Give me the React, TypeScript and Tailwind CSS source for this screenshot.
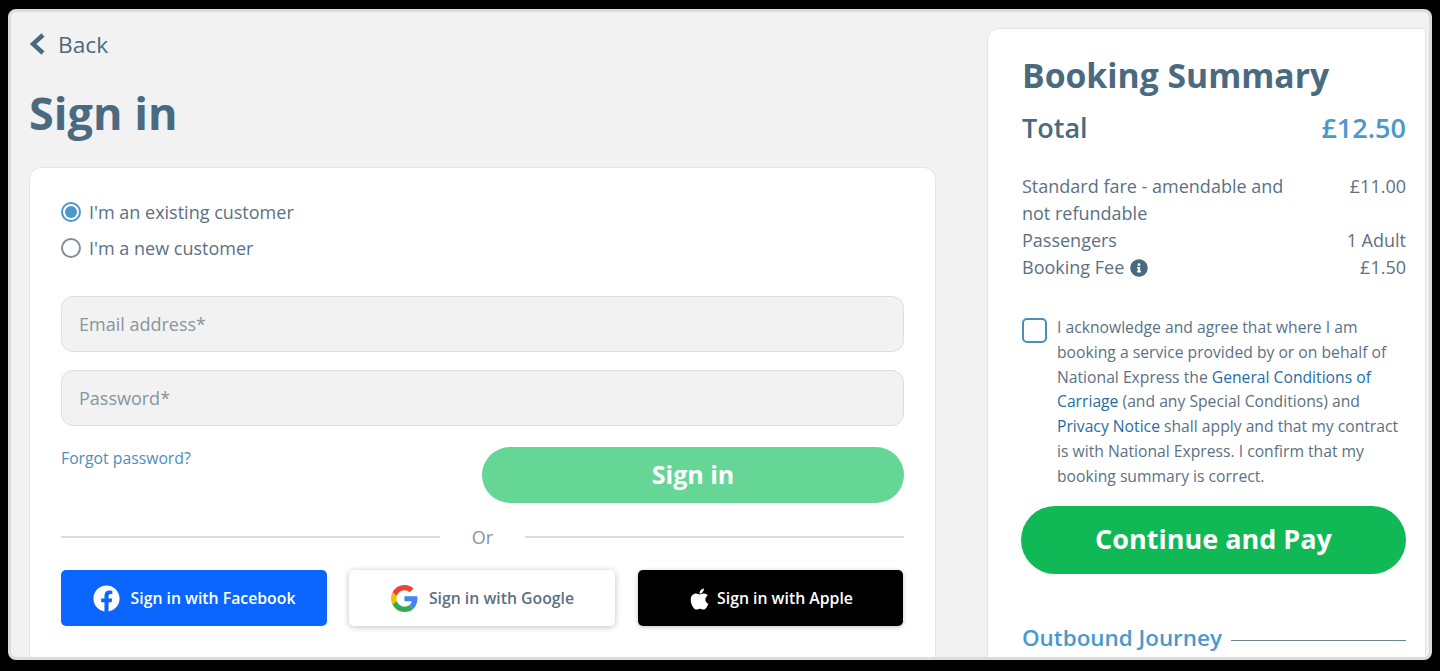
import { FaApple, FaFacebook, FaInfoCircle } from 'react-icons/fa';

function GoogleLogo() {
  return (
    <svg className="w-[27px] h-[27px]" viewBox="0 0 48 48">
      <path fill="#EA4335" d="M24 9.5c3.54 0 6.71 1.22 9.21 3.6l6.85-6.85C35.9 2.38 30.47 0 24 0 14.62 0 6.51 5.38 2.56 13.22l7.98 6.19C12.43 13.72 17.74 9.5 24 9.5z" />
      <path fill="#4285F4" d="M46.98 24.55c0-1.57-.15-3.09-.38-4.55H24v9.02h12.94c-.58 2.96-2.26 5.48-4.78 7.18l7.73 6c4.51-4.18 7.09-10.36 7.09-17.65z" />
      <path fill="#FBBC05" d="M10.53 28.59c-.48-1.45-.76-2.99-.76-4.59s.27-3.14.76-4.59l-7.98-6.19C.92 16.46 0 20.12 0 24c0 3.88.92 7.54 2.56 10.78l7.97-6.19z" />
      <path fill="#34A853" d="M24 48c6.48 0 11.93-2.13 15.89-5.81l-7.73-6c-2.15 1.45-4.92 2.3-8.16 2.3-6.26 0-11.57-4.22-13.47-9.91l-7.98 6.19C6.51 42.62 14.62 48 24 48z" />
    </svg>
  );
}

function Row({ label, value }: { label: React.ReactNode; value: string }) {
  return (
    <div className="flex justify-between">
      <div className="w-[275px]">{label}</div>
      <div>{value}</div>
    </div>
  );
}

export default function App() {
  return (
    <div className="h-screen bg-black pt-[9px] pl-[8px] pr-[8px] pb-[11px] font-['Open_Sans',sans-serif] text-[#4a6a80]">
      <div className="h-full bg-[#f2f2f2] border-[3px] border-[#dcdcdc] rounded-[8px] overflow-hidden flex pl-[18px] pr-[3px] pt-[16px]">
        {/* left column */}
        <div className="w-[907px] shrink-0">
          <div className="flex items-center gap-[12px] h-[34px]">
            <svg className="w-[17px] h-[24px] -mt-[3px]" viewBox="0 0 17 24" fill="none" stroke="currentColor" strokeWidth="4.4">
              <polyline points="14,3 4,12 14,21" />
            </svg>
            <span className="text-[22.7px]">Back</span>
          </div>
          <h1 className="text-[45px] leading-[60px] font-bold mt-[21px] text-[#4a6a80]">Sign in</h1>
          <div className="mt-[24px] bg-white border border-[#e4e4e4] rounded-[12px] px-[31px] pt-[32px] pb-[40px]">
            <div className="flex flex-col gap-[12px] text-[18px] leading-[24px] text-[#5b7183]">
              <label className="flex items-center gap-[8px]">
                <span className="w-[20px] h-[20px] rounded-full border-2 border-[#4a98cc] flex items-center justify-center">
                  <span className="w-[12px] h-[12px] rounded-full bg-[#4a98cc]" />
                </span>
                I'm an existing customer
              </label>
              <label className="flex items-center gap-[8px]">
                <span className="w-[20px] h-[20px] rounded-full border-2 border-[#7d8f9c]" />
                I'm a new customer
              </label>
            </div>
            <div className="mt-[36px] flex flex-col gap-[18px]">
              <div className="h-[56px] bg-[#f2f2f2] border border-[#dedede] rounded-[12px] px-[17px] flex items-center text-[18px] text-[#87959f]">Email address*</div>
              <div className="h-[56px] bg-[#f2f2f2] border border-[#dedede] rounded-[12px] px-[17px] flex items-center text-[18px] text-[#87959f]">Password*</div>
            </div>
            <div className="flex justify-between mt-[21px]">
              <a className="text-[15.75px] leading-[24px] text-[#4a8fbe] -mt-px">Forgot password?</a>
              <div className="w-[422px] h-[56px] rounded-full bg-[#65d695] text-white text-[25px] font-bold flex items-center justify-center">Sign in</div>
            </div>
            <div className="flex items-center mt-[21px] h-[26px] text-[18px] text-[#87959f]">
              <div className="flex-1 h-[2px] bg-[#d9dcde]" />
              <span className="w-[85px] text-center">Or</span>
              <div className="flex-1 h-[2px] bg-[#d9dcde]" />
            </div>
            <div className="flex gap-[22px] mt-[20px] text-[15.8px] font-semibold">
              <div className="w-[266px] h-[56px] pt-px rounded-[5px] bg-[#0a66ff] text-white flex items-center justify-center gap-[11px]">
                <FaFacebook className="w-[27px] h-[27px]" />
                Sign in with Facebook
              </div>
              <div className="w-[266px] h-[56px] pt-px pl-px rounded-[5px] bg-white text-[#5b7183] shadow-[0_1px_6px_rgba(0,0,0,0.25)] flex items-center justify-center gap-[11px]">
                <GoogleLogo />
                Sign in with Google
              </div>
              <div className="ml-px w-[265px] h-[56px] pt-px rounded-[5px] bg-black text-white shadow-[0_1px_4px_rgba(0,0,0,0.25)] flex items-center justify-center gap-[6px]">
                <FaApple className="w-[23px] h-[24px]" />
                Sign in with Apple
              </div>
            </div>
          </div>
        </div>

        {/* booking summary */}
        <div className="ml-[51px] flex-1 h-[700px] bg-white border border-[#e4e4e4] rounded-tl-[12px] pl-[34px] pr-[19px] pt-[23px]">
          <h2 className="text-[33.7px] leading-[46px] font-bold">Booking Summary</h2>
          <div className="flex justify-between items-center mt-[10px] text-[27px] leading-[40px] font-semibold">
            <span>Total</span>
            <span className="text-[#4a98cc]">£12.50</span>
          </div>
          <div className="mt-[25px] text-[18px] leading-[27px] text-[#5b7183]">
            <Row label="Standard fare - amendable and not refundable" value="£11.00" />
            <Row label="Passengers" value="1 Adult" />
            <Row
              label={
                <span className="flex items-center gap-[6px]">
                  Booking Fee
                  <FaInfoCircle className="w-[18px] h-[18px] text-[#4a6a80]" />
                </span>
              }
              value="£1.50"
            />
          </div>
          <div className="flex gap-[10px] mt-[34px]">
            <span className="w-[25px] h-[25px] mt-[3px] shrink-0 rounded-[5px] border-2 border-[#4a8fbe]" />
            <p className="text-[15.7px] leading-[24.8px] text-[#5b7183]">
              I acknowledge and agree that where I am booking a service provided by or on behalf of National Express the{' '}
              <a className="text-[#1f6da3]">General Conditions of Carriage</a> (and any Special Conditions) and{' '}
              <a className="text-[#1f6da3]">Privacy Notice</a> shall apply and that my contract is with National Express. I confirm that my booking summary is correct.
            </p>
          </div>
          <div className="mt-[17px] -ml-px h-[68px] rounded-full bg-[#10b956] text-white text-[27px] font-bold flex items-center justify-center">Continue and Pay</div>
          <div className="flex items-center gap-[9px] mt-[48px]">
            <span className="text-[22.4px] leading-[32px] font-semibold text-[#4a98cc]">Outbound Journey</span>
            <div className="flex-1 h-px bg-[#6f8492] mt-[5px]" />
          </div>
        </div>
      </div>
    </div>
  );
}
